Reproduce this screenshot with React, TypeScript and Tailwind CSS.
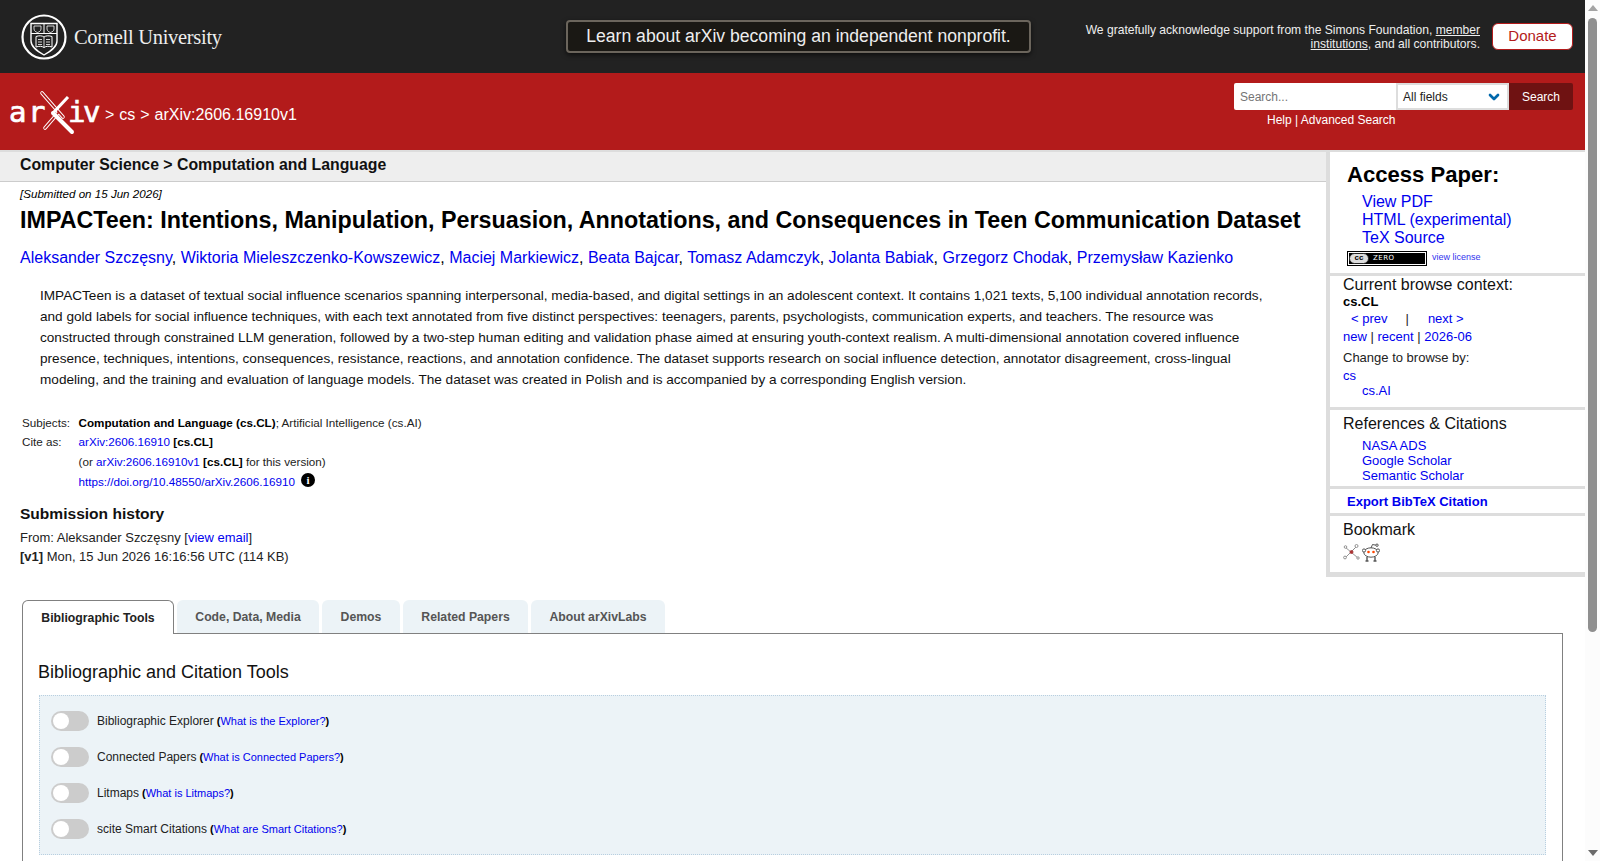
import React from 'react';
import { ChevronDown } from 'lucide-react';

const linkClass = 'text-[#0000ee]';

const CornellSeal = () => (
  <svg width="46" height="46" viewBox="0 0 46 46" fill="none" stroke="#fff">
    <circle cx="23" cy="23" r="21.5" strokeWidth="2.2" />
    <path d="M10 9.5H36V27C36 33 30 37 23 41C16 37 10 33 10 27Z" strokeWidth="1.4" />
    <path d="M10 19.5H36M23 9.5V19.5" strokeWidth="1" />
    <path d="M13 12H20V15C20 17 18 18 16.5 18.5C15 18 13 17 13 15Z" strokeWidth="0.8" />
    <path d="M26 12H33V15C33 17 31 18 29.5 18.5C28 18 26 17 26 15Z" strokeWidth="0.8" />
    <path d="M15 22.5C18 21.5 21 21.5 23 23C25 21.5 28 21.5 31 22.5V33C28 32 25 32 23 33.5C21 32 18 32 15 33Z" strokeWidth="1" />
    <path d="M23 23V33.5M17 25.5H21M17 28H21M17 30.5H21M25 25.5H29M25 28H29M25 30.5H29" strokeWidth="0.8" />
  </svg>
);

const ArxivLogo = () => (
  <svg width="92" height="42" viewBox="0 0 92 42" className="overflow-visible">
    <g fill="#fff" stroke="#fff" strokeWidth="0.7" fontFamily="'DejaVu Sans Mono', monospace" fontSize="29">
      <text x="-1" y="30">a</text>
      <text x="18" y="30">r</text>
      <text x="58" y="30">i</text>
      <text x="73" y="30">v</text>
    </g>
    <path d="M32 1L53 25M35 36L48 21" stroke="#fff" strokeWidth="3.6" strokeLinecap="round" fill="none" />
    <path d="M32 1L53 25M35 36L48 21" stroke="#b31b1b" strokeWidth="1.8" strokeLinecap="round" fill="none" />
    <path d="M43 21L62 40" stroke="#fff" strokeWidth="4" strokeLinecap="round" />
    <path d="M43 21L58 5" stroke="#fff" strokeWidth="3" />
  </svg>
);

const CcZero = () => (
  <span className="flex h-[15px] w-[80px] border border-black bg-white p-[1px]">
    <span className="flex flex-1 items-center bg-black">
      <span className="flex h-[11px] w-[20px] items-center justify-center rounded-full border border-[#222] bg-[#ddd] text-[8px] leading-none font-bold text-black">cc</span>
      <span className="ml-[4px] font-['DejaVu_Sans',sans-serif] text-[7px] tracking-[0.5px] text-white">ZERO</span>
    </span>
  </span>
);

const BibsonomyIcon = () => (
  <svg width="17" height="17" viewBox="0 0 17 17" fill="none" stroke="#888" strokeWidth="0.9">
    <path d="M2 4L15 15M14 3L2 15M8 9L13 4" />
    <circle cx="2.5" cy="4" r="1.3" fill="#fff" />
    <circle cx="13.5" cy="3" r="1.5" fill="#fff" />
    <circle cx="15" cy="15" r="1.2" fill="#fff" />
    <circle cx="2" cy="14.5" r="1.4" fill="#fff" />
    <circle cx="8.5" cy="9" r="1.5" fill="#a33" stroke="#a33" />
  </svg>
);

const RedditIcon = () => (
  <svg width="18" height="19" viewBox="0 0 18 19" fill="none" stroke="#555" strokeWidth="1">
    <ellipse cx="9" cy="9.5" rx="7.2" ry="4.7" fill="#fff" />
    <circle cx="2" cy="7.5" r="1.6" fill="#fff" />
    <circle cx="16" cy="7.5" r="1.6" fill="#fff" />
    <path d="M9 5L10.5 1.5L14 2.2" />
    <circle cx="15" cy="2.2" r="1.2" fill="#fff" />
    <circle cx="6.5" cy="9" r="1.3" fill="#ff4500" stroke="none" />
    <circle cx="11.5" cy="9" r="1.3" fill="#ff4500" stroke="none" />
    <path d="M5 14V17.5M13 14V17.5M3.5 18H6.5M11.5 18H14.5" strokeWidth="1.4" />
  </svg>
);

const Toggle = () => (
  <span className="flex h-[20px] w-[38px] shrink-0 items-center rounded-full bg-[#ccc] pl-[2px]">
    <span className="h-[16px] w-[16px] rounded-full bg-white" />
  </span>
);

const tools = [
  ['Bibliographic Explorer', 'What is the Explorer?'],
  ['Connected Papers', 'What is Connected Papers?'],
  ['Litmaps', 'What is Litmaps?'],
  ['scite Smart Citations', 'What are Smart Citations?'],
];

const authors = [
  'Aleksander Szczęsny',
  'Wiktoria Mieleszczenko-Kowszewicz',
  'Maciej Markiewicz',
  'Beata Bajcar',
  'Tomasz Adamczyk',
  'Jolanta Babiak',
  'Grzegorz Chodak',
  'Przemysław Kazienko',
];

const tabs = [
  ['Code, Data, Media', 'w-[142px]'],
  ['Demos', 'w-[78px]'],
  ['Related Papers', 'w-[125px]'],
  ['About arXivLabs', 'w-[134px]'],
];

const App: React.FC = () => {
  return (
    <div className="flex h-[861px] overflow-hidden bg-white font-['Liberation_Sans',Arial,sans-serif] text-black">
      <div className="w-[1585px] shrink-0">
        {/* cornell bar */}
        <div className="flex h-[73px] items-center bg-[#222] text-white">
          <div className="flex w-[566px] items-center pl-[21px]">
            <CornellSeal />
            <span className="mt-[1px] ml-[7px] font-['Liberation_Serif',serif] text-[20.5px] tracking-[-0.3px] text-[#eee]">Cornell University</span>
          </div>
          <div className="flex h-[33px] w-[465px] items-center justify-center rounded-[4px] border-2 border-[#6b655c] bg-[#1a1814] text-[17.6px] text-[#eee] shadow-[0_2px_5px_rgba(0,0,0,0.6)]">
            Learn about arXiv becoming an independent nonprofit.
          </div>
          <div className="ml-auto w-[425px] text-right text-[12.1px] leading-[14px] text-[#eee]">
            We gratefully acknowledge support from the Simons Foundation, <span className="underline">member institutions</span>, and all contributors.
          </div>
          <button className="mr-[12px] ml-[12px] h-[27px] w-[81px] rounded-[6px] border border-[#b31b1b] bg-white text-[15px] text-[#b31b1b]">Donate</button>
        </div>

        {/* red header */}
        <div className="flex h-[79px] border-b-2 border-[#ddd] bg-[#b31b1b] text-white">
          <div className="flex items-center pt-[3px] pl-[10px]">
            <ArxivLogo />
            <span className="mt-[4px] ml-[3px] text-[16px] [word-spacing:0.5px]">&gt; cs &gt; arXiv:2606.16910v1</span>
          </div>
          <div className="mt-[10px] mr-[12px] ml-auto flex w-[339px] flex-col">
            <div className="flex h-[27px]">
              <div className="flex w-[162px] items-center rounded-l-[2px] bg-white pl-[6px] text-[12px] text-[#757575]">Search...</div>
              <div className="flex w-[113px] items-center justify-between border-2 border-[#ddd] bg-white pr-[5px] pl-[5px] text-[12px] text-[#222]">
                All fields
                <ChevronDown size={16} strokeWidth={4} className="text-[#0068ac]" />
              </div>
              <div className="flex w-[64px] items-center justify-center rounded-r-[2px] bg-[#6f1212] text-[12px] text-white">Search</div>
            </div>
            <div className="mt-[2px] w-[276px] pl-[33px] text-[12px] leading-[17px]">Help | Advanced Search</div>
          </div>
        </div>

        <div className="flex">
          {/* main column */}
          <div className="w-[1326px] shrink-0">
            <div className="flex h-[30px] items-center border-b border-[#ccc] bg-[#eee] pb-[4px] pl-[20px] text-[15.84px] font-bold text-[#111]">
              Computer Science &gt; Computation and Language
            </div>
            <div className="pl-[20px]">
              <div className="mt-[5px] text-[11.6px] leading-[14px] italic">[Submitted on 15 Jun 2026]</div>
              <h1 className="mt-[5px] text-[23.3px] leading-[28px] font-bold whitespace-nowrap">
                IMPACTeen: Intentions, Manipulation, Persuasion, Annotations, and Consequences in Teen Communication Dataset
              </h1>
              <div className="mt-[14px] text-[16.01px] leading-[20px]">
                {authors.map((name, i) => (
                  <React.Fragment key={name}>
                    <a className={linkClass}>{name}</a>
                    {i < authors.length - 1 ? ', ' : ''}
                  </React.Fragment>
                ))}
              </div>
              <p className="mt-[17px] ml-[20px] w-[1240px] text-[13.6px] leading-[21px] text-[#111]">
                IMPACTeen is a dataset of textual social influence scenarios spanning interpersonal, media-based, and digital settings in an adolescent context. It contains 1,021 texts, 5,100 individual annotation records, and gold labels for social influence techniques, with each text annotated from five distinct perspectives: teenagers, parents, psychologists, communication experts, and teachers. The resource was constructed through constrained LLM generation, followed by a two-step human editing and validation phase aimed at ensuring youth-context realism. A multi-dimensional annotation covered influence presence, techniques, intentions, consequences, resistance, reactions, and annotation confidence. The dataset supports research on social influence detection, annotator disagreement, cross-lingual modeling, and the training and evaluation of language models. The dataset was created in Polish and is accompanied by a corresponding English version.
              </p>
              <div className="mt-[23px] ml-[2px] flex text-[11.68px] leading-[20px] text-[#222]">
                <div className="w-[56.5px]">
                  <div className="leading-[19px]">Subjects:</div>
                  <div>Cite as:</div>
                </div>
                <div>
                  <div className="leading-[19px]"><span className="font-bold text-black">Computation and Language (cs.CL)</span>; Artificial Intelligence (cs.AI)</div>
                  <div><a className={linkClass}>arXiv:2606.16910</a> <b className="text-black">[cs.CL]</b></div>
                  <div>(or <a className={linkClass}>arXiv:2606.16910v1</a> <b className="text-black">[cs.CL]</b> for this version)</div>
                  <div className="flex items-start">
                    <a className={linkClass}>https://doi.org/10.48550/arXiv.2606.16910</a>
                    <span className="mt-[1px] ml-[6px] flex h-[14px] w-[14px] items-center justify-center rounded-full bg-black font-['Liberation_Serif',serif] text-[11px] leading-none font-bold text-white">i</span>
                  </div>
                </div>
              </div>
              <h2 className="mt-[12px] text-[15.55px] leading-[20px] font-bold text-[#111]">Submission history</h2>
              <div className="mt-[4px] text-[12.98px] leading-[19px] text-[#222]">
                <div>From: Aleksander Szczęsny [<a className={linkClass}>view email</a>]</div>
                <div><b>[v1]</b> Mon, 15 Jun 2026 16:16:56 UTC (114 KB)</div>
              </div>
            </div>
          </div>

          {/* sidebar */}
          <div className="h-[425px] flex-1 border-b-[5px] border-l-4 border-[#ddd] bg-white">
            <div className="h-[124px] border-b-[3px] border-[#ddd] pt-[9px] pl-[17px]">
              <div className="text-[22.1px] leading-[28px] font-bold">Access Paper:</div>
              <div className="mt-[4px] ml-[15px] text-[16px] leading-[18.2px]">
                <div><a className={linkClass}>View PDF</a></div>
                <div><a className={linkClass}>HTML (experimental)</a></div>
                <div><a className={linkClass}>TeX Source</a></div>
              </div>
              <div className="mt-[3px] flex items-center">
                <CcZero />
                <a className="ml-[5px] text-[9px] text-[#3333ee]">view license</a>
              </div>
            </div>
            <div className="h-[134px] border-b-[3px] border-[#ddd] pl-[13px] text-[13px]">
              <div className="text-[16px] leading-[18px] text-[#111]">Current browse context:</div>
              <div className="text-[13px] leading-[15px] font-bold">cs.CL</div>
              <div className="mt-[1px] flex leading-[18px] text-[#222]">
                <a className={`ml-[8px] ${linkClass}`}>&lt; prev</a>
                <span className="ml-[18px]">|</span>
                <a className={`ml-[19px] ${linkClass}`}>next &gt;</a>
              </div>
              <div className="leading-[18px] text-[#222]">
                <a className={linkClass}>new</a> | <a className={linkClass}>recent</a> | <a className={linkClass}>2026-06</a>
              </div>
              <div className="mt-[3px] leading-[18px] text-[#222]">Change to browse by:</div>
              <div className="mt-[1px] leading-[15px]"><a className={linkClass}>cs</a></div>
              <div className="ml-[19px] leading-[15px]"><a className={linkClass}>cs.AI</a></div>
            </div>
            <div className="h-[79px] border-b-[3px] border-[#ddd] pt-[4px] pl-[13px]">
              <div className="text-[16px] leading-[20px] text-[#111]">References &amp; Citations</div>
              <div className="mt-[4px] ml-[19px] text-[13px] leading-[15px]">
                <div><a className={linkClass}>NASA ADS</a></div>
                <div><a className={linkClass}>Google Scholar</a></div>
                <div><a className={linkClass}>Semantic Scholar</a></div>
              </div>
            </div>
            <div className="flex h-[27px] items-center border-b-[3px] border-[#ddd] pt-[2px] pl-[17px] text-[13px] font-bold">
              <a className={linkClass}>Export BibTeX Citation</a>
            </div>
            <div className="pt-[4px] pl-[13px]">
              <div className="text-[16px] leading-[20px] text-[#111]">Bookmark</div>
              <div className="mt-[3px] flex gap-[2px]">
                <BibsonomyIcon />
                <RedditIcon />
              </div>
            </div>
          </div>
        </div>

        {/* tabs */}
        <div className="mt-[23px] ml-[22px] w-[1541px]">
          <div className="flex items-end gap-[3px]">
            <div className="relative -mb-[1px] flex h-[34px] w-[152px] items-center justify-center rounded-t-[6px] border border-b-0 border-[#808080] bg-white pt-[1px] text-[12.24px] font-bold text-[#222]">
              Bibliographic Tools
            </div>
            {tabs.map(([label, width]) => (
              <div key={label} className={`flex h-[33px] items-center justify-center rounded-t-[6px] bg-[#ecf3f7] pt-[2px] text-[12.24px] font-bold text-[#555] ${width}`}>
                {label}
              </div>
            ))}
          </div>
          <div className="h-[300px] border border-[#808080] px-[16px]">
            <h2 className="mt-[27px] -ml-[1px] text-[18px] leading-[22px] text-[#111]">Bibliographic and Citation Tools</h2>
            <div className="mt-[12px] flex flex-col gap-[16px] border border-dotted border-[#b8cfe0] bg-[#ecf3f7] px-[11px] py-[15px]">
              {tools.map(([label, help]) => (
                <div key={label} className="flex h-[20px] items-center text-[12px] text-[#222]">
                  <Toggle />
                  <span className="ml-[8px]">{label}</span>
                  <span className="ml-[3px] text-[11px] font-bold text-black">(</span>
                  <a className={`text-[11px] ${linkClass}`}>{help}</a>
                  <span className="text-[11px] font-bold text-black">)</span>
                </div>
              ))}
            </div>
          </div>
        </div>
      </div>

      {/* scrollbar */}
      <div className="flex w-[15px] shrink-0 flex-col items-center bg-[#fcfcfc]">
        <span className="mt-[5px] h-0 w-0 border-x-[5px] border-b-[6px] border-x-transparent border-b-[#a3a3a3]" />
        <span className="mt-[7px] h-[614px] w-[9px] rounded-full bg-[#8f8f8f]" />
        <span className="mt-auto mb-[5px] h-0 w-0 border-x-[5px] border-t-[6px] border-x-transparent border-t-[#6b6b6b]" />
      </div>
    </div>
  );
};

export default App;
